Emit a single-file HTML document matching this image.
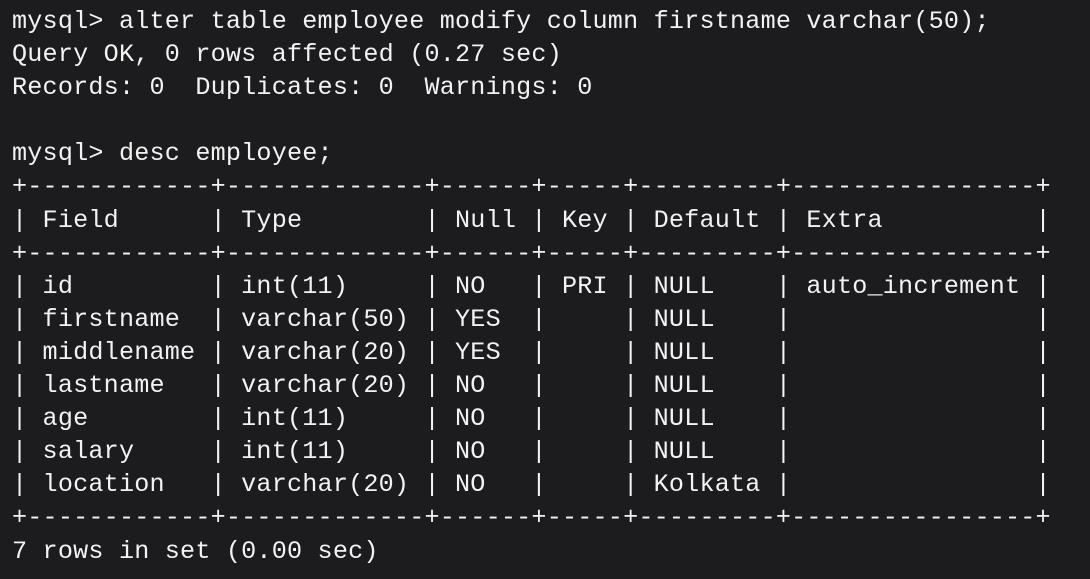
<!DOCTYPE html>
<html><head><meta charset="utf-8"><style>
html,body{margin:0;padding:0;background:#1c1c1e;width:1090px;height:579px;overflow:hidden}
pre{margin:0;position:absolute;left:12px;top:5px;font-family:"Liberation Mono",monospace;font-size:25px;letter-spacing:0.2px;line-height:33.1px;color:#f2f2f2;transform:scaleX(1.0049);transform-origin:0 0}
</style></head><body><pre>mysql&gt; alter table employee modify column firstname varchar(50);
Query OK, 0 rows affected (0.27 sec)
Records: 0  Duplicates: 0  Warnings: 0

mysql&gt; desc employee;
+------------+-------------+------+-----+---------+----------------+
| Field      | Type        | Null | Key | Default | Extra          |
+------------+-------------+------+-----+---------+----------------+
| id         | int(11)     | NO   | PRI | NULL    | auto_increment |
| firstname  | varchar(50) | YES  |     | NULL    |                |
| middlename | varchar(20) | YES  |     | NULL    |                |
| lastname   | varchar(20) | NO   |     | NULL    |                |
| age        | int(11)     | NO   |     | NULL    |                |
| salary     | int(11)     | NO   |     | NULL    |                |
| location   | varchar(20) | NO   |     | Kolkata |                |
+------------+-------------+------+-----+---------+----------------+
7 rows in set (0.00 sec)</pre></body></html>
